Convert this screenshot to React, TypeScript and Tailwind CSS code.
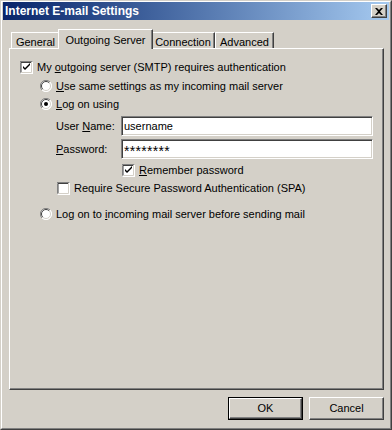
import React from "react";

const FONT = { fontFamily: '"Liberation Sans", Arial, sans-serif' };

function Check({ checked }: { checked?: boolean }) {
  return (
    <svg width="13" height="13" viewBox="0 0 13 13" className="shrink-0">
      <rect x="0" y="0" width="13" height="13" fill="#ffffff" />
      <path d="M0 12.5V0.5H12.5" stroke="#808080" fill="none" />
      <path d="M1 11.5V1.5H11.5" stroke="#404040" fill="none" />
      <path d="M1.5 12V11.5H11.5V1" stroke="#d4d0c8" fill="none" />
      {checked && (
        <path d="M3 5 L3 7 L5 9 L10 4 L10 2 L5 7 Z" fill="#000" />
      )}
    </svg>
  );
}

function Radio({ checked }: { checked?: boolean }) {
  return (
    <svg width="12" height="12" viewBox="0 0 12 12" className="shrink-0">
      <circle cx="6" cy="6" r="5.5" fill="#ffffff" />
      <path d="M10 2 A5.5 5.5 0 0 0 2 10" stroke="#808080" fill="none" strokeWidth="1" />
      <path d="M9.2 2.8 A4.5 4.5 0 0 0 2.8 9.2" stroke="#404040" fill="none" strokeWidth="1" />
      <path d="M2 10 A5.5 5.5 0 0 0 10 2" stroke="#ffffff" fill="none" strokeWidth="1" />
      <path d="M2.8 9.2 A4.5 4.5 0 0 0 9.2 2.8" stroke="#d4d0c8" fill="none" strokeWidth="1" />
      {checked && <circle cx="6" cy="6" r="2" fill="#000" />}
    </svg>
  );
}

function Tab({ label, width, selected }: { label: string; width: number; selected?: boolean }) {
  if (selected) {
    return (
      <div
        className="relative z-10 -mx-[2px] -mb-px flex h-[20px] items-start justify-center border-l border-t border-white bg-[#d4d0c8] pt-[2px] shadow-[inset_-1px_0_#808080] border-r border-r-[#404040]"
        style={{ width }}
      >
        {label}
      </div>
    );
  }
  return (
    <div
      className="flex h-[16px] items-start justify-center border-l border-t border-white bg-[#d4d0c8] pt-px shadow-[inset_-1px_0_#808080] border-r border-r-[#404040]"
      style={{ width }}
    >
      {label}
    </div>
  );
}

function Field({ children }: { children: React.ReactNode }) {
  return (
    <div className="flex h-[20px] w-[252px] items-center border border-t-[#808080] border-l-[#808080] border-b-white border-r-white bg-white pl-[2px] shadow-[inset_1px_1px_#404040,inset_-1px_-1px_#d4d0c8]">
      {children}
    </div>
  );
}

function Button({ label, isDefault }: { label: string; isDefault?: boolean }) {
  return (
    <div
      className={
        "flex h-[23px] w-[75px] items-center justify-center " +
        (isDefault ? "border border-black" : "")
      }
    >
      <div className="flex h-full w-full items-center justify-center border border-t-white border-l-white border-b-[#404040] border-r-[#404040] shadow-[inset_-1px_-1px_#808080]">
        {label}
      </div>
    </div>
  );
}

export default function App() {
  return (
    <div
      className="flex h-[430px] w-[392px] flex-col border border-t-[#d4d0c8] border-l-[#d4d0c8] border-b-[#404040] border-r-[#404040] bg-[#d4d0c8] text-[11px] text-black"
      style={FONT}
    >
      <div className="flex h-full flex-col border border-t-white border-l-white border-b-[#808080] border-r-[#808080] px-px">
        {/* title bar */}
        <div className="flex h-[18px] items-center justify-between bg-gradient-to-r from-[#0a246a] to-[#a6caf0] pl-[2px] pr-[2px]">
          <span className="text-[12px] font-bold text-white">Internet E-mail Settings</span>
          <div className="flex h-[14px] w-[16px] items-center justify-center border border-t-white border-l-white border-b-[#404040] border-r-[#404040] bg-[#d4d0c8] shadow-[inset_-1px_-1px_#808080]">
            <svg width="8" height="7" viewBox="0 0 8 7">
              <path d="M0 0h2l2 2 2-2h2L5 3.5 8 7H6L4 5 2 7H0l3-3.5z" fill="#000" />
            </svg>
          </div>
        </div>

        {/* tabs */}
        <div className="mt-[9px] flex items-end pl-[8px]">
          <Tab label="General" width={49} />
          <Tab label="Outgoing Server" width={95} selected />
          <Tab label="Connection" width={64} />
          <Tab label="Advanced" width={59} />
        </div>

        {/* panel */}
        <div className="ml-[6px] h-[342px] w-[375px] border border-t-white border-l-white border-b-[#404040] border-r-[#404040] shadow-[inset_-1px_-1px_#808080]">
          <div className="flex flex-col pt-[9px]">
            <div className="flex h-[18px] items-center gap-[4px] pl-[10px]">
              <Check checked />
              <span>
                My <u>o</u>utgoing server (SMTP) requires authentication
              </span>
            </div>
            <div className="mt-px flex h-[18px] items-center gap-[4px] pl-[30px]">
              <Radio />
              <span>
                <u>U</u>se same settings as my incoming mail server
              </span>
            </div>
            <div className="flex h-[18px] items-center gap-[4px] pl-[30px]">
              <Radio checked />
              <span>
                <u>L</u>og on using
              </span>
            </div>
            <div className="mt-[3px] flex h-[20px] items-center pl-[46px]">
              <span className="w-[65px]">
                User <u>N</u>ame:
              </span>
              <Field>username</Field>
            </div>
            <div className="mt-[3px] flex h-[20px] items-center pl-[46px]">
              <span className="w-[65px]">
                <u>P</u>assword:
              </span>
              <Field>
                <span className="pt-[4px] text-[14px] leading-none tracking-[0.3px]">********</span>
              </Field>
            </div>
            <div className="mt-[3px] flex h-[17px] items-center gap-[4px] pl-[112px]">
              <Check checked />
              <span>
                <u>R</u>emember password
              </span>
            </div>
            <div className="flex h-[18px] items-center gap-[4px] pl-[47px]">
              <Check />
              <span>Require Secure Password Authentication (SPA)</span>
            </div>
            <div className="mt-[8px] flex h-[18px] items-center gap-[4px] pl-[30px]">
              <Radio />
              <span>
                Log on to <u>i</u>ncoming mail server before sending mail
              </span>
            </div>
          </div>
        </div>

        {/* buttons */}
        <div className="mt-[7px] flex justify-end gap-[6px] pr-[5px]">
          <Button label="OK" isDefault />
          <Button label="Cancel" />
        </div>
      </div>
    </div>
  );
}
